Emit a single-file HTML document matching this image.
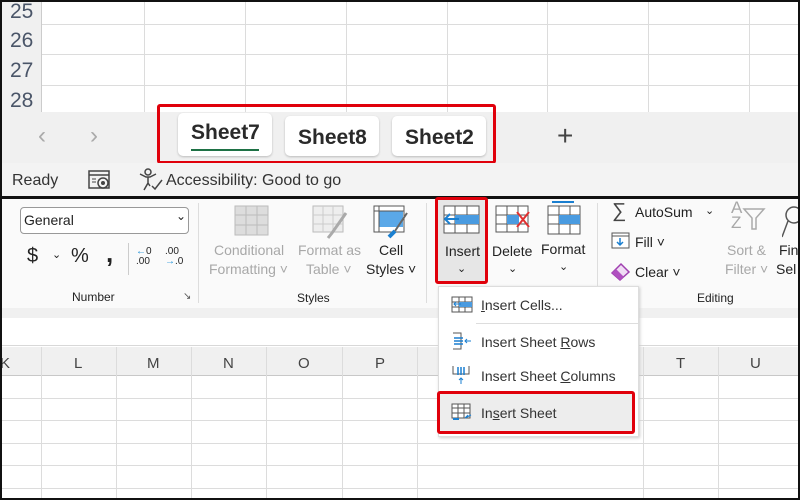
<!DOCTYPE html><html><head><style>
*{margin:0;padding:0;box-sizing:border-box}
body{width:800px;height:500px;overflow:hidden;background:#fff;font-family:"Liberation Sans",sans-serif;position:relative;color:#222}
.a{position:absolute}
.vl{position:absolute;width:1px;background:#dcdcdc}
.hl{position:absolute;height:1px;background:#dcdcdc}
.t{position:absolute;white-space:nowrap}
.gray{color:#a8a8a8}
.red{position:absolute;border:3px solid #e0000b;border-radius:3px}
.rn{position:absolute;left:10px;font-size:21px;color:#4a5568}
.tab{position:absolute;font-size:21px;font-weight:bold;color:#2a2a2a}
</style></head><body>
<div class="a" style="left:0;top:0;width:42px;height:112px;background:#f0f0f0;border-right:1px solid #ccc"></div>
<div class="rn" style="top:0px">25</div>
<div class="rn" style="top:29px">26</div>
<div class="rn" style="top:59px">27</div>
<div class="rn" style="top:89px">28</div>
<div class="hl" style="left:42px;top:24px;width:756px"></div>
<div class="hl" style="left:42px;top:54px;width:756px"></div>
<div class="hl" style="left:42px;top:85px;width:756px"></div>
<div class="vl" style="left:144px;top:0;height:112px"></div>
<div class="vl" style="left:245px;top:0;height:112px"></div>
<div class="vl" style="left:346px;top:0;height:112px"></div>
<div class="vl" style="left:447px;top:0;height:112px"></div>
<div class="vl" style="left:547px;top:0;height:112px"></div>
<div class="vl" style="left:648px;top:0;height:112px"></div>
<div class="vl" style="left:749px;top:0;height:112px"></div>
<div class="a" style="left:0;top:112px;width:800px;height:51px;background:#f0f0f0"></div>
<div class="t" style="left:38px;top:122px;font-size:24px;color:#aaa">‹</div>
<div class="t" style="left:90px;top:122px;font-size:24px;color:#aaa">›</div>
<div class="a" style="left:178px;top:113px;width:94px;height:43px;background:#fff;border-radius:5px;box-shadow:0 1px 2px #bbb"></div>
<div class="tab" style="left:191px;top:121px">Sheet7</div>
<div class="a" style="left:191px;top:149px;width:68px;height:2px;background:#1e7145"></div>
<div class="a" style="left:285px;top:116px;width:94px;height:40px;background:#fff;border-radius:5px;box-shadow:0 1px 2px #bbb"></div>
<div class="tab" style="left:298px;top:126px">Sheet8</div>
<div class="a" style="left:392px;top:116px;width:94px;height:40px;background:#fff;border-radius:5px;box-shadow:0 1px 2px #bbb"></div>
<div class="tab" style="left:405px;top:126px">Sheet2</div>
<div class="t" style="left:557px;top:120px;font-size:28px;color:#444">+</div>
<div class="red" style="left:157px;top:104px;width:339px;height:60px"></div>
<div class="a" style="left:0;top:163px;width:800px;height:35px;background:#f3f3f3"></div>
<div class="t" style="left:12px;top:172px;font-size:16px;color:#333">Ready</div>
<svg class="a" style="left:88px;top:170px" width="24" height="22" viewBox="0 0 24 22"><rect x="1" y="1" width="20" height="17" fill="none" stroke="#444" stroke-width="1.5"/><line x1="1" y1="5" x2="21" y2="5" stroke="#444" stroke-width="1.5"/><circle cx="15" cy="13" r="5" fill="#f3f3f3" stroke="#444" stroke-width="1.5"/><circle cx="15" cy="13" r="2" fill="#444"/><line x1="4" y1="9" x2="8" y2="9" stroke="#444"/><line x1="4" y1="12" x2="8" y2="12" stroke="#444"/></svg>
<svg class="a" style="left:138px;top:168px" width="26" height="24" viewBox="0 0 26 24"><circle cx="10" cy="4" r="3" fill="none" stroke="#444" stroke-width="1.5"/><path d="M2 6 L8 9 L12 9 L18 6 M10 9 L10 15 L6 22 M10 15 L12 18" fill="none" stroke="#444" stroke-width="1.5"/><path d="M14 18 L17 21 L24 12" fill="none" stroke="#444" stroke-width="1.5"/></svg>
<div class="t" style="left:166px;top:172px;font-size:16px;color:#333">Accessibility: Good to go</div>
<div class="a" style="left:0;top:196px;width:800px;height:3px;background:#111"></div>
<div class="a" style="left:0;top:199px;width:800px;height:109px;background:#fafafa"></div>
<div class="a" style="left:0;top:308px;width:800px;height:11px;background:#f0f0f0"></div>
<div class="a" style="left:20px;top:207px;width:169px;height:27px;border:1px solid #999;border-radius:4px;background:#fff"></div>
<div class="t" style="left:24px;top:212px;font-size:14px">General</div>
<div class="t" style="left:176px;top:209px;font-size:12px">⌄</div>
<div class="t" style="left:27px;top:245px;font-size:20px">$</div>
<div class="t" style="left:52px;top:248px;font-size:11px">⌄</div>
<div class="t" style="left:71px;top:245px;font-size:20px">%</div>
<div class="t" style="left:106px;top:238px;font-size:26px;font-weight:bold">,</div>
<div class="a" style="left:128px;top:243px;width:1px;height:32px;background:#ccc"></div>
<div class="t" style="left:136px;top:247px;font-size:10px;line-height:10px"><span style="color:#1a8fd8">←</span>0<br>.00</div>
<div class="t" style="left:165px;top:247px;font-size:10px;line-height:10px">.00<br><span style="color:#1a8fd8">→</span>.0</div>
<div class="t" style="left:72px;top:290px;font-size:12px">Number</div>
<div class="t" style="left:183px;top:291px;font-size:10px;color:#555">↘</div>
<div class="a" style="left:198px;top:203px;width:1px;height:100px;background:#ddd"></div>
<svg class="a" style="left:234px;top:205px" width="36" height="32"><rect x="1" y="1" width="33" height="29" fill="#ddd" stroke="#bbb"/><path d="M1 10H34M1 20H34M12 1V30M23 1V30" stroke="#bbb"/></svg>
<svg class="a" style="left:312px;top:205px" width="36" height="34"><rect x="1" y="1" width="30" height="26" fill="#eee" stroke="#bbb"/><path d="M1 10H31M1 19H31M11 1V27M21 1V27" stroke="#ccc"/><path d="M34 8 L20 28 L16 33" stroke="#aaa" stroke-width="3"/></svg>
<svg class="a" style="left:373px;top:205px" width="36" height="34"><rect x="1" y="1" width="30" height="26" fill="#fff" stroke="#555"/><rect x="6" y="6" width="24" height="16" fill="#5aa8e8"/><path d="M1 6H31M6 1V27" stroke="#555"/><path d="M34 8 L22 26" stroke="#666" stroke-width="2"/><path d="M22 26 L16 32" stroke="#1a7fd0" stroke-width="4"/></svg>
<div class="t gray" style="left:214px;top:242px;font-size:14px">Conditional</div>
<div class="t gray" style="left:209px;top:261px;font-size:14px">Formatting ˅</div>
<div class="t gray" style="left:298px;top:242px;font-size:14px">Format as</div>
<div class="t gray" style="left:306px;top:261px;font-size:14px">Table ˅</div>
<div class="t" style="left:379px;top:242px;font-size:14px">Cell</div>
<div class="t" style="left:366px;top:261px;font-size:14px">Styles ˅</div>
<div class="t" style="left:297px;top:291px;font-size:12px">Styles</div>
<div class="a" style="left:426px;top:203px;width:1px;height:100px;background:#ddd"></div>
<div class="a" style="left:438px;top:199px;width:47px;height:83px;background:#e6e6e6"></div>
<svg class="a" style="left:443px;top:205px" width="38" height="30"><rect x="1" y="1" width="35" height="27" fill="#fff" stroke="#555"/><path d="M1 10H36M1 19H36M12 1V28M24 1V28" stroke="#555"/><rect x="12" y="10" width="24" height="9" fill="#4a9be0"/><path d="M16 14H2M7 9L2 14L7 19" stroke="#1a7fd0" stroke-width="2" fill="none"/></svg>
<div class="t" style="left:445px;top:243px;font-size:14px">Insert</div>
<div class="t" style="left:457px;top:262px;font-size:11px">⌄</div>
<div class="red" style="left:435px;top:197px;width:53px;height:87px"></div>
<svg class="a" style="left:495px;top:205px" width="36" height="30"><rect x="1" y="1" width="32" height="26" fill="#fff" stroke="#555"/><path d="M1 10H33M1 19H33M12 1V27M23 1V27" stroke="#555"/><rect x="12" y="10" width="12" height="9" fill="#4a9be0"/><path d="M22 7L34 22M34 7L22 22" stroke="#e03030" stroke-width="2"/></svg>
<div class="t" style="left:492px;top:243px;font-size:14px">Delete</div>
<div class="t" style="left:508px;top:262px;font-size:11px">⌄</div>
<svg class="a" style="left:546px;top:200px" width="36" height="36"><path d="M6 2H28" stroke="#1a7fd0" stroke-width="2"/><rect x="2" y="6" width="32" height="28" fill="#fff" stroke="#555"/><path d="M2 15H34M2 24H34M13 6V34M24 6V34" stroke="#555"/><rect x="13" y="15" width="21" height="9" fill="#4a9be0"/></svg>
<div class="t" style="left:541px;top:241px;font-size:14px">Format</div>
<div class="t" style="left:559px;top:260px;font-size:11px">⌄</div>
<div class="a" style="left:597px;top:203px;width:1px;height:85px;background:#ddd"></div>
<div class="t" style="left:612px;top:200px;font-size:20px;color:#444">∑</div>
<div class="t" style="left:635px;top:204px;font-size:14px">AutoSum</div>
<div class="t" style="left:705px;top:204px;font-size:11px">⌄</div>
<svg class="a" style="left:611px;top:232px" width="20" height="18"><rect x="1" y="1" width="17" height="15" fill="#fff" stroke="#555"/><path d="M1 4H18" stroke="#555"/><path d="M9 6V13M6 10L9 13L12 10" stroke="#1a7fd0" stroke-width="1.5" fill="none"/></svg>
<div class="t" style="left:635px;top:234px;font-size:14px">Fill ˅</div>
<svg class="a" style="left:610px;top:261px" width="22" height="20"><path d="M2 12L11 3L19 11L10 19Z" fill="#f0dcf4" stroke="#a040b0" stroke-width="1.5"/><path d="M2 12L6 8L14 16L10 19Z" fill="#b050c0"/></svg>
<div class="t" style="left:635px;top:264px;font-size:14px">Clear ˅</div>
<div class="t gray" style="left:731px;top:200px;font-size:17px;line-height:15px">A<br>Z</div>
<svg class="a" style="left:742px;top:207px" width="24" height="24"><path d="M2 2H22L14 11V22H10V11Z" fill="none" stroke="#aaa" stroke-width="1.5"/></svg>
<div class="t gray" style="left:727px;top:242px;font-size:14px">Sort &amp;</div>
<div class="t gray" style="left:725px;top:261px;font-size:14px">Filter ˅</div>
<div class="t" style="left:779px;top:242px;font-size:14px">Fin</div>
<div class="t" style="left:776px;top:261px;font-size:14px">Sel</div>
<svg class="a" style="left:782px;top:205px" width="16" height="34"><circle cx="12" cy="10" r="8" fill="none" stroke="#555" stroke-width="1.5"/><path d="M6 16L0 32" stroke="#555" stroke-width="1.5"/></svg>
<div class="t" style="left:697px;top:291px;font-size:12px">Editing</div>
<div class="a" style="left:0;top:318px;width:800px;height:28px;background:#fff;border-bottom:1px solid #d8d8d8"></div>
<div class="a" style="left:0;top:347px;width:800px;height:29px;background:#f0f0f0;border-bottom:1px solid #c8c8c8"></div>
<div class="t" style="left:0;top:355px;font-size:15px;color:#444">K</div>
<div class="t" style="left:74px;top:355px;font-size:15px;color:#444">L</div>
<div class="t" style="left:147px;top:355px;font-size:15px;color:#444">M</div>
<div class="t" style="left:223px;top:355px;font-size:15px;color:#444">N</div>
<div class="t" style="left:298px;top:355px;font-size:15px;color:#444">O</div>
<div class="t" style="left:375px;top:355px;font-size:15px;color:#444">P</div>
<div class="t" style="left:676px;top:355px;font-size:15px;color:#444">T</div>
<div class="t" style="left:750px;top:355px;font-size:15px;color:#444">U</div>
<div class="vl" style="left:41px;top:347px;height:153px"></div>
<div class="vl" style="left:116px;top:347px;height:153px"></div>
<div class="vl" style="left:191px;top:347px;height:153px"></div>
<div class="vl" style="left:266px;top:347px;height:153px"></div>
<div class="vl" style="left:342px;top:347px;height:153px"></div>
<div class="vl" style="left:417px;top:347px;height:153px"></div>
<div class="vl" style="left:643px;top:347px;height:153px"></div>
<div class="vl" style="left:718px;top:347px;height:153px"></div>
<div class="hl" style="left:0;top:398px;width:800px"></div>
<div class="hl" style="left:0;top:420px;width:800px"></div>
<div class="hl" style="left:0;top:443px;width:800px"></div>
<div class="hl" style="left:0;top:465px;width:800px"></div>
<div class="hl" style="left:0;top:488px;width:800px"></div>
<div class="a" style="left:438px;top:286px;width:201px;height:151px;background:#fff;border:1px solid #ddd;box-shadow:1px 1px 3px #ccc"></div>
<div class="a" style="left:476px;top:323px;width:162px;height:1px;background:#ddd"></div>
<svg class="a" style="left:451px;top:296px" width="22" height="17"><rect x="1" y="1" width="20" height="15" fill="#fff" stroke="#555"/><path d="M1 6H21M1 11H21M8 1V16M14 1V16" stroke="#555"/><rect x="8" y="6" width="13" height="5" fill="#4a9be0"/><path d="M10 8H3M5 6L3 8L5 10" stroke="#1a7fd0" fill="none"/></svg>
<div class="t" style="left:481px;top:297px;font-size:14px;color:#333"><u>I</u>nsert Cells...</div>
<svg class="a" style="left:451px;top:331px" width="22" height="20"><path d="M2 2H10V18H2" fill="none" stroke="#555"/><path d="M3 7H12M3 10H12M3 13H12" stroke="#1a7fd0" stroke-width="1.5"/><path d="M20 10H14M16 8L14 10L16 12" stroke="#1a7fd0" fill="none"/></svg>
<div class="t" style="left:481px;top:334px;font-size:14px;color:#333">Insert Sheet <u>R</u>ows</div>
<svg class="a" style="left:451px;top:364px" width="22" height="22"><path d="M2 2V10H18V2" fill="none" stroke="#555"/><path d="M7 3V11M10 3V11M13 3V11" stroke="#1a7fd0" stroke-width="1.5"/><path d="M10 20V14M8 16L10 14L12 16" stroke="#1a7fd0" fill="none"/></svg>
<div class="t" style="left:481px;top:368px;font-size:14px;color:#333">Insert Sheet <u>C</u>olumns</div>
<div class="a" style="left:440px;top:394px;width:192px;height:37px;background:#ededed"></div>
<svg class="a" style="left:451px;top:403px" width="22" height="18"><rect x="1" y="1" width="18" height="14" fill="#fff" stroke="#555"/><path d="M1 5H19M1 10H19M7 1V15M13 1V15" stroke="#555"/><path d="M2 16H8" stroke="#1a7fd0" stroke-width="2"/><path d="M20 12L14 15M14 15L17 12" stroke="#1a7fd0" fill="none"/></svg>
<div class="t" style="left:481px;top:405px;font-size:14px;color:#333">In<u>s</u>ert Sheet</div>
<div class="red" style="left:437px;top:391px;width:198px;height:43px"></div>
<div class="a" style="left:0;top:0;width:800px;height:500px;border:2px solid #111"></div>
</body></html>
